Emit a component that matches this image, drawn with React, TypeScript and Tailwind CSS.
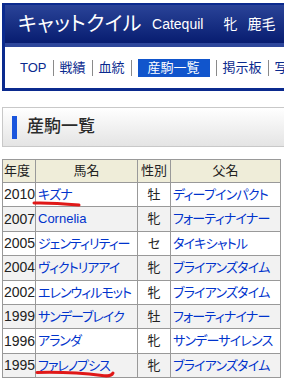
const FONT = { fontFamily: '"Liberation Sans", "Noto Sans CJK JP", sans-serif' };

const rows = [
  { y: "2010", name: "キズナ", sex: "牡", sire: "ディープインパクト" },
  { y: "2007", name: "Cornelia", sex: "牝", sire: "フォーティナイナー" },
  { y: "2005", name: "ジェンティリティー", sex: "セ", sire: "タイキシャトル" },
  { y: "2004", name: "ヴィクトリアアイ", sex: "牝", sire: "ブライアンズタイム" },
  { y: "2002", name: "エレンウィルモット", sex: "牝", sire: "ブライアンズタイム" },
  { y: "1999", name: "サンデーブレイク", sex: "牡", sire: "フォーティナイナー" },
  { y: "1996", name: "アランダ", sex: "牝", sire: "サンデーサイレンス" },
  { y: "1995", name: "ファレノプシス", sex: "牝", sire: "ブライアンズタイム" },
];

function Sep() {
  return <div className="w-px h-[16px] bg-[#8a8a8a]" />;
}

export default function App() {
  return (
    <div
      className="relative w-[284px] h-[382px] overflow-hidden bg-white text-[#222] [font-feature-settings:'palt']"
      style={FONT}
    >
      <div className="pt-[3px] pl-[2px]">
        <div className="w-[300px] border-t-2 border-l-[3px] border-b-[3px] border-[#0b2a8e]">
          <div className="h-[38px] bg-gradient-to-b from-[#2a4398] to-[#081c70] flex items-center pl-[13px] text-white">
            <span className="text-[20px] leading-none tracking-[0.5px]">キャットクイル</span>
            <span className="ml-[10px] text-[14px] leading-none">Catequil</span>
            <span className="ml-[20px] text-[14px] leading-none">牝</span>
            <span className="ml-[10px] text-[14px] leading-none">鹿毛</span>
          </div>
          <div className="h-[4px] bg-[#2d469b]" />
          <div className="h-[41px] bg-white flex items-center pl-[15px] text-[13px] text-[#0a2a8e] gap-[6px]">
            <span>TOP</span>
            <Sep />
            <span>戦績</span>
            <Sep />
            <span>血統</span>
            <Sep />
            <span className="w-[72px] h-[18px] bg-[#1155cc] text-white flex items-center justify-center">産駒一覧</span>
            <Sep />
            <span>掲示板</span>
            <Sep />
            <span>写真</span>
          </div>
        </div>
      </div>

      <div className="mt-[16px] ml-[2px] w-[300px] h-[40px] border border-[#c8c8c8] bg-gradient-to-b from-white to-[#e4e4e4] flex items-center pl-[9px]">
        <div className="w-[5px] h-[23px] bg-[#1a55dd]" />
        <span className="ml-[10px] text-[17px] font-medium text-[#2a2a2a]">産駒一覧</span>
      </div>

      <div className="relative mt-[12px] ml-[2px]">
        <table className="border-collapse w-[278px] table-fixed text-[13px]">
          <colgroup>
            <col className="w-[33px]" />
            <col className="w-[102px]" />
            <col className="w-[33px]" />
            <col className="w-[110px]" />
          </colgroup>
          <thead>
            <tr className="h-[23px] bg-[#efedd9]">
              <th className="border border-[#999] font-normal text-left pl-px">年度</th>
              <th className="border border-[#999] font-normal">馬名</th>
              <th className="border border-[#999] font-normal">性別</th>
              <th className="border border-[#999] font-normal">父名</th>
            </tr>
          </thead>
          <tbody>
            {rows.map((r, i) => (
              <tr key={r.y + r.name} className={(i % 2 === 0 ? "bg-white" : "bg-[#f2f2f2]") + " h-[24.4px]"}>
                <td className="border border-[#999] text-[14px] pl-px whitespace-nowrap">{r.y}</td>
                <td
                  className={
                    "border border-[#999] pl-[2px] text-[#0033cc] whitespace-nowrap overflow-hidden " +
                    (/^[A-Za-z]/.test(r.name) ? "tracking-normal" : "tracking-[-1px]")
                  }
                >
                  {r.name}
                </td>
                <td className="border border-[#999] text-center">{r.sex}</td>
                <td className="border border-[#999] pl-[2px] text-[#0033cc] whitespace-nowrap overflow-hidden tracking-[-0.8px]">{r.sire}</td>
              </tr>
            ))}
          </tbody>
        </table>
        <svg className="absolute left-0 top-0 pointer-events-none" width="284" height="230" viewBox="0 159 284 230">
          <path d="M32 203 C45 202.5 60 203.5 77 205" stroke="#e01818" strokeWidth="3" fill="none" strokeLinecap="round" />
          <path d="M35 372.5 C55 372 80 373 100 375.5 C106 376.5 110 375 111 373" stroke="#e01818" strokeWidth="3" fill="none" strokeLinecap="round" />
        </svg>
      </div>
    </div>
  );
}
